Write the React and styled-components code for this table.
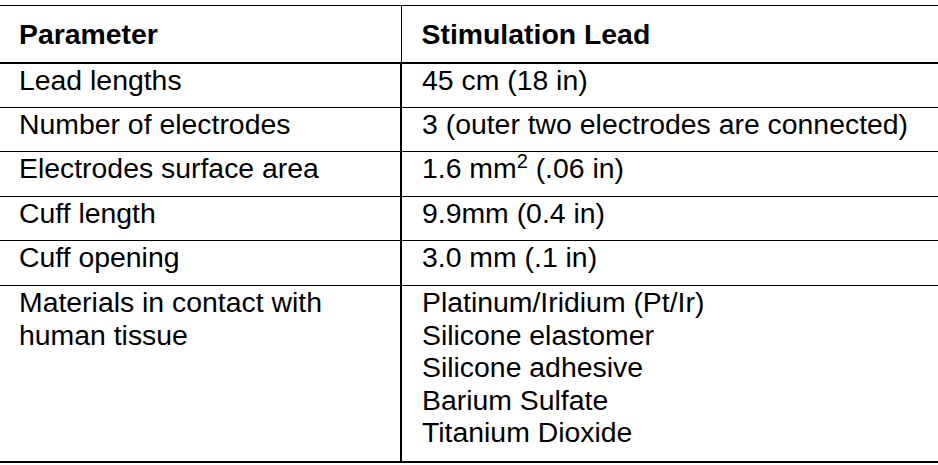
import React from "react";
import styled, { createGlobalStyle } from "styled-components";

const GlobalStyle = createGlobalStyle`
  html, body {
    margin: 0;
    padding: 0;
    background: #ffffff;
  }
  body {
    font-family: "Liberation Sans", Arial, sans-serif;
    color: #000;
  }
`;

const Page = styled.div`
  width: 938px;
  height: 465px;
  padding-top: 5px;
  box-sizing: border-box;
  overflow: hidden;
  background: #fff;
`;

const Table = styled.table`
  width: 938px;
  border-collapse: collapse;
  table-layout: fixed;
  font-size: 28.4px;
  line-height: 32px;
`;

const HeadCell = styled.th`
  text-align: left;
  font-weight: 700;
  vertical-align: top;
  height: 57px;
  padding: 12px 0 0 ${(p) => (p.$right ? "20px" : "19px")};
  box-sizing: border-box;
  border-top: 1px solid #000;
  border-bottom: 2px solid #000;
  border-right: ${(p) => (p.$right ? "none" : "1px solid #000")};
  width: ${(p) => (p.$right ? "auto" : "401px")};
`;

const Cell = styled.td`
  vertical-align: top;
  height: ${(p) => p.$h || 45}px;
  padding: 0 0 0 ${(p) => (p.$right ? "20px" : "19px")};
  box-sizing: border-box;
  border-bottom: ${(p) => (p.$last ? "2px" : "1px")} solid #000;
  border-right: ${(p) => (p.$right ? "none" : "2px solid #000")};
  white-space: nowrap;
`;

const Sup = styled.sup`
  font-size: 20px;
  line-height: 0;
  vertical-align: 10px;
`;

const Stack = styled.div`
  display: flex;
  flex-direction: column;
  line-height: 32.5px;
`;

const rows = [
  { name: "Lead lengths", value: "45 cm (18 in)", h: 45 },
  { name: "Number of electrodes", value: "3 (outer two electrodes are connected)", h: 44 },
  {
    name: "Electrodes surface area",
    value: (
      <>
        1.6 mm<Sup>2</Sup> (.06 in)
      </>
    ),
    h: 45,
  },
  { name: "Cuff length", value: "9.9mm (0.4 in)", h: 44 },
  { name: "Cuff opening", value: "3.0 mm (.1 in)", h: 45 },
];

const materials = [
  "Platinum/Iridium (Pt/Ir)",
  "Silicone elastomer",
  "Silicone adhesive",
  "Barium Sulfate",
  "Titanium Dioxide",
];

export default function App() {
  return (
    <>
      <GlobalStyle />
      <Page>
        <Table>
          <thead>
            <tr>
              <HeadCell>Parameter</HeadCell>
              <HeadCell $right>Stimulation Lead</HeadCell>
            </tr>
          </thead>
          <tbody>
            {rows.map((r) => (
              <tr key={r.name}>
                <Cell $h={r.h}>{r.name}</Cell>
                <Cell $right $h={r.h}>
                  {r.value}
                </Cell>
              </tr>
            ))}
            <tr>
              <Cell $h={176} $last>
                <Stack>
                  <span>Materials in contact with</span>
                  <span>human tissue</span>
                </Stack>
              </Cell>
              <Cell $right $h={176} $last>
                <Stack>
                  {materials.map((m) => (
                    <span key={m}>{m}</span>
                  ))}
                </Stack>
              </Cell>
            </tr>
          </tbody>
        </Table>
      </Page>
    </>
  );
}
